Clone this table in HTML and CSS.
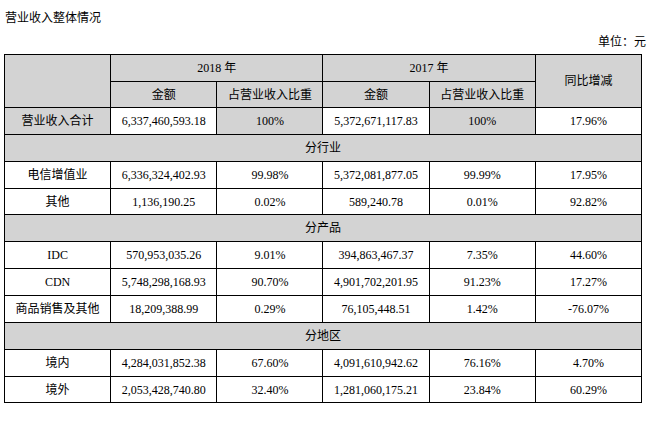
FILE: index.html
```html
<!DOCTYPE html>
<html lang="zh">
<head>
<meta charset="utf-8">
<title>营业收入整体情况</title>
<link rel="stylesheet" href="styles.css">
</head>
<body>
<div class="page">
  <div class="title">营业收入整体情况</div>
  <div class="unit">单位：元</div>
  <table class="rev">
    <colgroup>
      <col class="c"><col class="c"><col class="c"><col class="c"><col class="c"><col class="c">
    </colgroup>
    <tr class="h27">
      <td class="g" rowspan="2"></td>
      <td class="g" colspan="2">2018 年</td>
      <td class="g" colspan="2">2017 年</td>
      <td class="g" rowspan="2">同比增减</td>
    </tr>
    <tr class="h26">
      <td class="g">金额</td>
      <td class="g">占营业收入比重</td>
      <td class="g">金额</td>
      <td class="g">占营业收入比重</td>
    </tr>
    <tr class="h27">
      <td class="g">营业收入合计</td>
      <td>6,337,460,593.18</td>
      <td class="g">100%</td>
      <td>5,372,671,117.83</td>
      <td class="g">100%</td>
      <td>17.96%</td>
    </tr>
    <tr class="h27"><td class="g" colspan="6">分行业</td></tr>
    <tr class="h27">
      <td>电信增值业</td><td>6,336,324,402.93</td><td>99.98%</td><td>5,372,081,877.05</td><td>99.99%</td><td>17.95%</td>
    </tr>
    <tr class="h26">
      <td>其他</td><td>1,136,190.25</td><td>0.02%</td><td>589,240.78</td><td>0.01%</td><td>92.82%</td>
    </tr>
    <tr class="h27"><td class="g" colspan="6">分产品</td></tr>
    <tr class="h27">
      <td>IDC</td><td>570,953,035.26</td><td>9.01%</td><td>394,863,467.37</td><td>7.35%</td><td>44.60%</td>
    </tr>
    <tr class="h27">
      <td>CDN</td><td>5,748,298,168.93</td><td>90.70%</td><td>4,901,702,201.95</td><td>91.23%</td><td>17.27%</td>
    </tr>
    <tr class="h27">
      <td>商品销售及其他</td><td>18,209,388.99</td><td>0.29%</td><td>76,105,448.51</td><td>1.42%</td><td>-76.07%</td>
    </tr>
    <tr class="h27"><td class="g" colspan="6">分地区</td></tr>
    <tr class="h27">
      <td>境内</td><td>4,284,031,852.38</td><td>67.60%</td><td>4,091,610,942.62</td><td>76.16%</td><td>4.70%</td>
    </tr>
    <tr class="h26">
      <td>境外</td><td>2,053,428,740.80</td><td>32.40%</td><td>1,281,060,175.21</td><td>23.84%</td><td>60.29%</td>
    </tr>
  </table>
</div>
</body>
</html>
```
FILE: styles.css
```css
html, body {
  margin: 0;
  padding: 0;
  background: #ffffff;
}
body {
  font-family: "Liberation Serif", "Noto Sans CJK SC", serif;
  font-size: 12px;
  color: #000000;
}
.page {
  padding: 11px 10px 0 4px;
}
.title {
  height: 14px;
  line-height: 14px;
  padding-left: 1px;
}
.unit {
  margin-top: 11px;
  height: 13px;
  line-height: 13px;
  text-align: right;
  padding-right: 6px;
  margin-right: -10px;
}
.rev {
  margin-top: 5px;
  width: 638px;
  border-collapse: collapse;
  table-layout: fixed;
}
.rev td {
  border: 1px solid #000000;
  text-align: center;
  vertical-align: middle;
  padding: 0;
  line-height: 14px;
  white-space: nowrap;
}
.rev .g {
  background: #d3d3d3;
}
.h27 {
  height: 27px;
}
.h26 {
  height: 26px;
}
```
